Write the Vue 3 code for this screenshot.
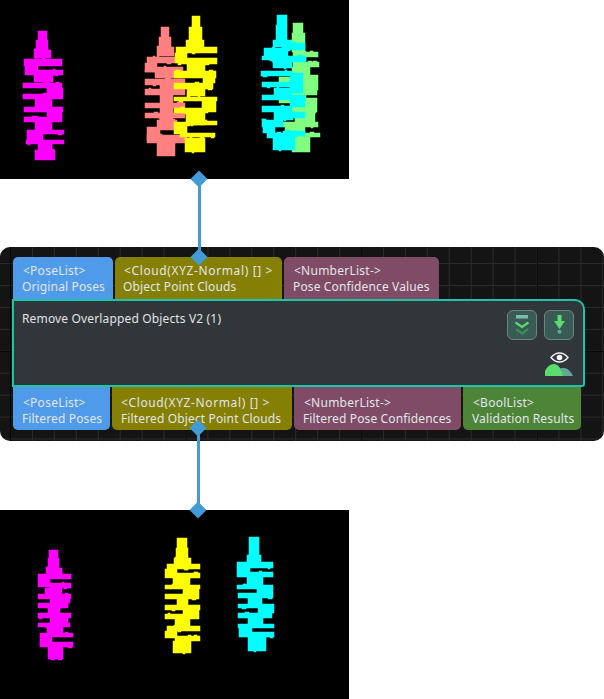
<script setup>
const topPorts = [
  { type: '<PoseList>', name: 'Original Poses', w: 100, c: 'blue', ti: 10, ni: 9 },
  { type: '<Cloud(XYZ-Normal) [] >', name: 'Object Point Clouds', w: 167, c: 'olive', ti: 9, ni: 8, wide: true },
  { type: '<NumberList->', name: 'Pose Confidence Values', w: 155, c: 'plum', ti: 10, ni: 9 }
]
const bottomPorts = [
  { type: '<PoseList>', name: 'Filtered Poses', w: 97, c: 'blue', ti: 10, ni: 9 },
  { type: '<Cloud(XYZ-Normal) [] >', name: 'Filtered Object Point Clouds', w: 180, c: 'olive', ti: 9, ni: 9, wide: true },
  { type: '<NumberList->', name: 'Filtered Pose Confidences', w: 167, c: 'plum', ti: 10, ni: 9 },
  { type: '<BoolList>', name: 'Validation Results', w: 118, c: 'green', ti: 10, ni: 9 }
]
const topShapes = [
  { fill: '#ff00ff', r: [[38,31,47,40],[36,40,48,50],[34,50,51,58],[24,59,62,66],[25,66,37,75],[37,70,63,75],[34,66,38,75],[34,75,53,82],[23,83,62,88],[47,88,63,94],[23,94,63,99],[35,99,52,107],[24,107,63,112],[47,112,62,117],[24,117,62,122],[35,122,52,130],[27,130,64,134],[27,134,43,140],[26,140,64,144],[38,144,52,150],[35,150,55,160]] },
  { fill: '#ff8080', r: [[161,27,169,37],[159,37,171,47],[157,47,174,56],[147,57,177,63],[145,63,157,72],[155,67,183,78],[145,70,160,72],[145,79,185,85],[160,85,175,89],[145,89,185,95],[160,95,173,103],[145,103,185,108],[160,108,173,113],[145,113,185,118],[160,118,173,123],[157,120,177,130],[147,127,160,140],[147,135,187,143],[157,143,175,156]] },
  { fill: '#ffff00', r: [[192,16,200,27],[189,27,202,40],[186,40,204,47],[176,47,217,53],[175,53,187,63],[178,58,217,64],[187,64,205,71],[174,71,216,78],[203,78,215,83],[174,83,213,89],[187,89,205,96],[174,97,217,101],[202,101,216,112],[174,108,205,113],[186,113,205,125],[174,122,187,134],[187,121,217,125],[180,133,215,137],[185,138,205,152]] },
  { fill: '#80ff80', r: [[293,23,303,33],[292,33,305,52],[293,52,318,57],[292,57,306,62],[293,62,319,67],[292,67,310,77],[305,75,318,90],[279,77,292,82],[292,77,306,87],[292,87,317,95],[279,98,317,103],[292,95,306,112],[303,103,317,112],[295,112,315,122],[283,122,318,127],[285,127,305,133],[283,133,320,137],[292,137,310,152]] },
  { fill: '#00ffff', r: [[277,15,287,25],[276,25,287,40],[273,40,292,47],[283,43,305,50],[264,48,288,56],[262,56,276,60],[272,56,306,62],[273,62,292,68],[261,71,292,76],[290,73,303,93],[262,82,292,87],[274,88,292,95],[262,95,305,100],[290,100,305,107],[262,106,292,112],[274,112,305,118],[274,118,293,120],[262,120,283,127],[263,125,275,133],[267,133,295,138],[283,131,305,136],[273,138,295,150]] }
]
const bottomShapes = [
  { fill: '#ff00ff', r: [[49,550,58,558],[48,558,59,568],[46,568,62,574],[38,574,71,579],[38,579,50,587],[50,583,71,588],[45,588,62,594],[38,594,71,599],[50,599,70,603],[38,603,68,608],[48,608,60,613],[38,613,71,618],[50,618,68,623],[38,623,70,627],[47,627,63,633],[40,633,73,637],[40,637,52,645],[40,642,73,647],[48,647,63,659]] },
  { fill: '#ffff00', r: [[177,538,187,548],[176,548,188,558],[174,558,191,564],[167,564,200,569],[165,569,177,578],[175,573,200,578],[173,578,190,585],[165,585,200,589],[183,589,199,594],[165,594,199,599],[177,599,188,605],[165,605,200,610],[183,610,199,614],[165,614,199,619],[175,619,190,626],[167,626,200,631],[165,631,177,638],[175,636,200,641],[173,641,191,653]] },
  { fill: '#00ffff', r: [[249,537,259,555],[247,555,261,562],[237,562,273,568],[237,568,250,577],[248,572,273,577],[247,577,263,585],[237,585,273,589],[257,589,273,593],[238,593,273,598],[248,598,262,604],[238,604,274,608],[258,608,274,613],[238,613,272,618],[248,618,263,624],[238,624,274,628],[239,628,252,637],[250,632,274,637],[248,637,266,651]] }
]

// Scan noise: small deterministic lumps along the long edges of each slice.
function withNoise(shapes) {
  let seed = 7
  const rnd = () => {
    seed = (seed * 16807) % 2147483647
    return seed / 2147483647
  }
  return shapes.map((s) => {
    const extra = []
    for (const [x1, y1, x2, y2] of s.r) {
      const w = x2 - x1
      if (w < 14) continue
      for (let i = 0; i < 2; i++) {
        const bx = x1 + Math.floor(rnd() * (w - 3))
        const above = rnd() > 0.5
        extra.push([bx, above ? y1 - 1 : y2, bx + 2 + Math.floor(rnd() * 3), above ? y1 : y2 + 1])
      }
    }
    return { fill: s.fill, r: s.r.concat(extra) }
  })
}
const topCloud = withNoise(topShapes)
const bottomCloud = withNoise(bottomShapes)
</script>

<template>
  <div class="page">
    <svg class="cloud cloud-top" viewBox="0 0 349 179">
      <g v-for="(s, i) in topCloud" :key="i" :fill="s.fill" :stroke="s.fill" stroke-width="0.5">
        <rect v-for="(b, j) in s.r" :key="j" :x="b[0]" :y="b[1]" :width="b[2] - b[0]" :height="b[3] - b[1]" />
      </g>
    </svg>

    <div class="node">
      <div class="ports ports-top">
        <div v-for="p in topPorts" :key="p.name" class="port port-up" :class="p.c" :style="{ width: p.w + 'px' }">
          <span class="label type" :class="{ wide: p.wide }" :style="{ paddingLeft: p.ti + 'px' }">{{ p.type }}</span>
          <span class="label" :style="{ paddingLeft: p.ni + 'px' }">{{ p.name }}</span>
        </div>
      </div>
      <div class="panel">
        <div class="title">Remove Overlapped Objects V2 (1)</div>
        <div class="tools">
          <div class="buttons">
            <div class="btn">
              <svg width="30" height="30" viewBox="0 0 30 30" fill="none">
                <rect x="9" y="5" width="12" height="3.500" fill="#79bfae" />
                <path d="M8.500 12.500l6.500 4.500 6.500-4.500" stroke="#5bdc6c" stroke-width="2.200" />
                <path d="M9 19l6 4.500 6-4.500" stroke="#3b8c57" stroke-width="2.200" />
              </svg>
            </div>
            <div class="btn">
              <svg width="30" height="30" viewBox="0 0 30 30">
                <path d="M13.500 5h4v6h3.500L15.500 19 10 11h3.500z" fill="#5bdc6c" />
                <circle cx="15.500" cy="21.700" r="2" fill="#5fa89a" />
              </svg>
            </div>
          </div>
          <svg class="eye" width="30" height="26" viewBox="0 0 30 26">
            <path d="M6 6.500C11 .5 18 .5 23 6.500C18 12.500 11 12.500 6 6.500z" fill="none" stroke="#efefef" stroke-width="1.400" />
            <circle cx="14.500" cy="6.500" r="2.800" fill="#ffffff" />
            <path d="M13 18C15 17 17 17 19 17C23 17 26 21 28 25H16z" fill="#62a898" />
            <path d="M0 25V20C2 16 5 13 9 13C13 13 16 17 18 25z" fill="#5bdc6c" />
          </svg>
        </div>
      </div>
      <div class="ports">
        <div v-for="p in bottomPorts" :key="p.name" class="port port-down" :class="p.c" :style="{ width: p.w + 'px' }">
          <span class="label type" :class="{ wide: p.wide }" :style="{ paddingLeft: p.ti + 'px' }">{{ p.type }}</span>
          <span class="label" :style="{ paddingLeft: p.ni + 'px' }">{{ p.name }}</span>
        </div>
      </div>
    </div>

    <svg class="cloud cloud-bottom" viewBox="0 510 349 189">
      <g v-for="(s, i) in bottomCloud" :key="i" :fill="s.fill" :stroke="s.fill" stroke-width="0.5">
        <rect v-for="(b, j) in s.r" :key="j" :x="b[0]" :y="b[1]" :width="b[2] - b[0]" :height="b[3] - b[1]" />
      </g>
    </svg>

    <div class="wire wire-top"></div>
    <div class="wire wire-bottom"></div>
    <div class="pin pin-a"></div>
    <div class="pin pin-b"></div>
    <div class="pin pin-c"></div>
    <div class="pin pin-d"></div>
  </div>
</template>

<style>
html, body { margin: 0; background: #ffffff; }
</style>

<style scoped>
.page {
  position: relative;
  width: 604px;
  height: 699px;
  overflow: hidden;
  background: #ffffff;
  font-family: "Noto Sans", "Open Sans", sans-serif;
}
.cloud {
  display: block;
  width: 349px;
  background: #000000;
}
.cloud-top { height: 179px; }
.cloud-bottom { height: 189px; margin-top: 69px; }
.node {
  box-sizing: border-box;
  height: 194px;
  margin-top: 68px;
  padding-top: 10px;
  border-radius: 10px;
  background-color: #141414;
  background-image:
    linear-gradient(90deg, #060606 1px, transparent 1px),
    linear-gradient(#060606 1px, transparent 1px),
    linear-gradient(#2b2b2b 1px, transparent 1px),
    linear-gradient(90deg, #2b2b2b 1px, transparent 1px);
  background-size: 175.600px 100%, 100% 175.600px, 21.950px 21.950px, 21.950px 21.950px;
  background-position: 10px 0, 0 104px, 10px 16px, 10px 16px;
}
.ports {
  display: flex;
  gap: 2px;
  padding-left: 13px;
}
.port {
  box-sizing: border-box;
  display: flex;
  flex-direction: column;
  justify-content: center;
  color: #e2e6ea;
  font-size: 12px;
  line-height: 16px;
  letter-spacing: 0.14px;
  white-space: nowrap;
}
.port-up {
  height: 42px;
  padding-top: 2px;
  border-radius: 5px 5px 0 0;
}
.port-down {
  height: 43px;
  padding-top: 4px;
  border-radius: 0 0 5px 5px;
}
.label { display: block; }
.type { letter-spacing: 0.25px; }
.type.wide { letter-spacing: 0.62px; }
.blue { background: #4f9bea; }
.olive { background: #857f03; }
.plum { background: #7f4b66; }
.green { background: #4d8437; }
.panel {
  box-sizing: border-box;
  display: flex;
  justify-content: space-between;
  width: 573px;
  height: 88px;
  margin-left: 12px;
  padding: 9px 8px 0 8px;
  border: 2px solid #1cc4a8;
  border-radius: 0 10px 3px 0;
  background: #31363b;
}
.title {
  margin-top: 1px;
  color: #e2e2e2;
  font-size: 12px;
  line-height: 16px;
  letter-spacing: 0.15px;
}
.tools {
  display: flex;
  flex-direction: column;
  align-items: flex-end;
}
.buttons {
  display: flex;
  gap: 7px;
  margin-right: 1px;
}
.btn {
  box-sizing: border-box;
  display: flex;
  align-items: center;
  justify-content: center;
  width: 30px;
  height: 30px;
  border: 1px solid #6b8680;
  border-radius: 6px;
  background: #3a5a56;
}
.btn svg { flex: none; }
.eye {
  display: block;
  margin-top: 11px;
}
.wire {
  position: absolute;
  width: 3px;
  background: #429ad6;
}
.wire-top { left: 198px; top: 179px; height: 78px; }
.wire-bottom { left: 197px; top: 428px; height: 82px; }
.pin {
  position: absolute;
  width: 12px;
  height: 12px;
  background: #429ad6;
  transform: rotate(45deg);
}
.pin-a { left: 193px; top: 173px; }
.pin-b { left: 193px; top: 251px; }
.pin-c { left: 192px; top: 422px; }
.pin-d { left: 192px; top: 504px; }
</style>
